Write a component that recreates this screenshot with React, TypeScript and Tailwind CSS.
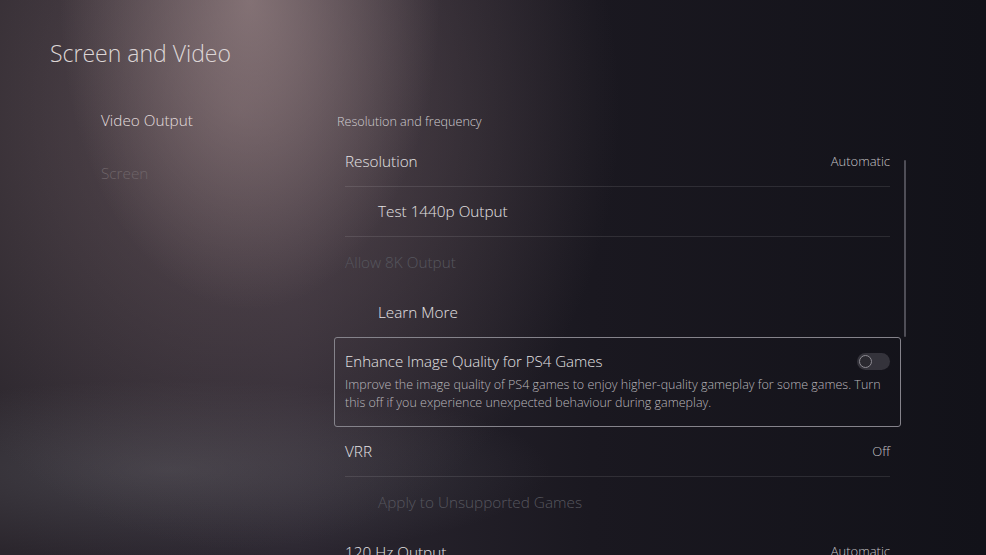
import React from "react";

type Row = {
  label: string;
  value?: string;
  sub?: boolean;
  disabled?: boolean;
  divider?: boolean;
};

const topRows: Row[] = [
  { label: "Resolution", value: "Automatic", divider: true },
  { label: "Test 1440p Output", sub: true, divider: true },
  { label: "Allow 8K Output", disabled: true },
  { label: "Learn More", sub: true },
];

const bottomRows: Row[] = [
  { label: "VRR", value: "Off", divider: true },
  { label: "Apply to Unsupported Games", sub: true, disabled: true },
  { label: "120 Hz Output", value: "Automatic" },
];

function SettingRow({ row }: { row: Row }) {
  return (
    <div
      className={`flex h-[50px] items-center justify-between mx-[11px] ${
        row.divider ? "border-b border-white/10" : ""
      }`}
    >
      <span
        className={`text-[15.3px] ${row.sub ? "pl-[33px]" : ""} ${
          row.disabled ? "text-[#56565e]" : "text-[#e4e2e4]"
        }`}
      >
        {row.label}
      </span>
      {row.value && (
        <span className="text-[13px] text-[#c4c2c6]">{row.value}</span>
      )}
    </div>
  );
}

export default function App() {
  return (
    <div
      className="relative h-[555px] w-[986px] overflow-hidden font-['Open_Sans',sans-serif] font-light
        bg-[radial-gradient(ellipse_190px_310px_at_250px_0px,rgba(175,152,152,0.55),transparent),radial-gradient(ellipse_380px_440px_at_240px_110px,rgba(125,104,108,0.55),transparent),radial-gradient(ellipse_380px_90px_at_170px_470px,rgba(95,95,102,0.45),transparent),linear-gradient(to_right,#2b262d_0%,#2c2731_30%,#1a1820_60%,#121219_100%)]"
    >
      <h1 className="pl-[50px] pt-[37px] text-[23px] leading-[32px] font-light text-[#ddd6d6]">
        Screen and Video
      </h1>

      <div className="mt-[35px] flex">
        {/* Left nav */}
        <nav className="flex w-[334px] flex-col pl-[101px]">
          <span className="h-[32px] leading-[32px] text-[15.3px] text-[#e2dcdc]">
            Video Output
          </span>
          <span className="mt-[21px] h-[32px] leading-[32px] text-[15.3px] text-[#6e6468]">
            Screen
          </span>
        </nav>

        {/* Right panel */}
        <div className="flex">
          <div className="w-[567px]">
            <div className="pl-[3px] pt-[2px] h-[33px] leading-[32px] text-[12.6px] text-[#cfccd0]">
              Resolution and frequency
            </div>
            <div>
              {topRows.map((r) => (
                <SettingRow key={r.label} row={r} />
              ))}
            </div>

            <div className="h-[90px] rounded-[3px] border-[1.5px] border-[#85838b] px-[10px] pt-[12px]">
              <div className="flex items-center justify-between">
                <span className="text-[15px] leading-[22px] text-[#e4e2e4]">
                  Enhance Image Quality for PS4 Games
                </span>
                <span className="flex h-[17px] w-[33px] items-center rounded-full bg-[#34333b] pl-[2px]">
                  <span className="h-[13px] w-[13px] rounded-full border-[1.5px] border-[#8e8c93] bg-[#2a2930]" />
                </span>
              </div>
              <p className="mt-[4px] text-[12.5px] leading-[18px] text-[#b9b6bb]">
                Improve the image quality of PS4 games to enjoy higher-quality
                gameplay for some games. Turn this off if you experience
                unexpected behaviour during gameplay.
              </p>
            </div>

            {bottomRows.map((r) => (
              <SettingRow key={r.label} row={r} />
            ))}
          </div>

          {/* Scrollbar */}
          <div className="ml-[3px] mt-[56px] h-[177px] w-[2px] rounded-full bg-[#4f4e57]" />
        </div>
      </div>
    </div>
  );
}
